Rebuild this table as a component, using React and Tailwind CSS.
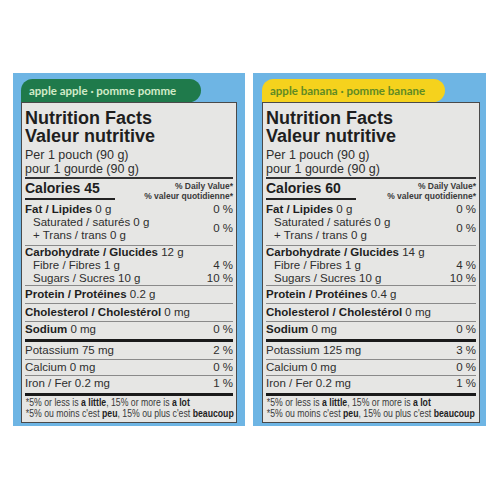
import React from 'react';

const panels = [
  {
    tab: 'apple apple · pomme pomme',
    tabClass: 'w-[180px] bg-[#1f7a4b] text-[#d2ebc8]',
    pad: 'pl-[8px] pr-[8px] w-[232px]',
    cal: '45',
    carb: '12 g',
    protein: '0.2 g',
    potassium: '75 mg',
    potPct: '2 %',
  },
  {
    tab: 'apple banana · pomme banane',
    tabClass: 'w-[183px] bg-[#f5d21d] text-[#5f8a24]',
    pad: 'pl-[9px] pr-[6px] w-[233px]',
    cal: '60',
    carb: '14 g',
    protein: '0.4 g',
    potassium: '125 mg',
    potPct: '3 %',
  },
];

const Row = ({ children, pct, className = '' }) => (
  <div className={`flex justify-between leading-[13px] ${className}`}>
    <div>{children}</div>
    {pct && <div>{pct}</div>}
  </div>
);

const Label = ({ b, v }) => (
  <>
    <span className="font-bold text-[#1e1e1e]">{b}</span> {v}
  </>
);

const Panel = ({ p }) => (
  <div className={`bg-[#6eb5e4] pt-[6px] pb-[3px] ${p.pad}`}>
    <div
      className={`h-[23px] flex items-center pl-[8px] rounded-tl-[12px] rounded-r-[12px] font-bold text-[11.5px] ${p.tabClass}`}
      style={{ fontFamily: 'Lato, "Open Sans", sans-serif' }}
    >
      {p.tab}
    </div>
    <div
      className="border-[1.5px] border-[#4a4a4a] bg-[#e6e6e4] px-[3px] pt-[6px] pb-[3.5px] text-[#2e2e2e] text-[11.5px]"
      style={{ fontFamily: '"Liberation Sans", Arial, sans-serif' }}
    >
      <div className="font-bold text-[18px] leading-[18px] text-[#1e1e1e]">
        <div>Nutrition Facts</div>
        <div>Valeur nutritive</div>
      </div>
      <div className="mt-[2.5px] text-[12.5px] leading-[14px]">
        <div>Per 1 pouch (90 g)</div>
        <div>pour 1 gourde (90 g)</div>
      </div>
      <div className="mt-[1px] h-[2px] bg-[#333]" />

      {/* calories */}
      <div className="mt-[1px] flex justify-between">
        <div>
          <div className="font-bold text-[14px] leading-[16px] text-[#1e1e1e]">Calories {p.cal}</div>
          <div className="mt-[2px] h-[2.5px] w-[90px] bg-[#222]" />
        </div>
        <div className="pt-[1px] text-right font-bold text-[8.5px] leading-[10px] text-[#3a3a3a]">
          <div>% Daily Value*</div>
          <div>% valeur quotidienne*</div>
        </div>
      </div>

      <div className="pt-[2.7px] pb-[4.3px] border-b border-[#8a8a8a] leading-[12.5px]">
        <Row pct="0 %" className="leading-[12.5px]">
          <Label b="Fat / Lipides" v="0 g" />
        </Row>
        <div className="flex justify-between items-center">
          <div className="pl-[8px]">
            <div>Saturated / saturés 0 g</div>
            <div>+ Trans / trans 0 g</div>
          </div>
          <div>0 %</div>
        </div>
      </div>

      <div className="border-b border-[#8a8a8a]">
        <Row>
          <Label b="Carbohydrate / Glucides" v={p.carb} />
        </Row>
        <Row pct="4 %" className="pl-[8px]">Fibre / Fibres 1 g</Row>
        <Row pct="10 %" className="pl-[8px]">Sugars / Sucres 10 g</Row>
      </div>

      <Row className="pt-[2px] pb-[2px] border-b border-[#8a8a8a]">
        <Label b="Protein / Protéines" v={p.protein} />
      </Row>
      <Row className="pt-[2px] pb-[2px] border-b border-[#8a8a8a]">
        <Label b="Cholesterol / Cholestérol" v="0 mg" />
      </Row>
      <Row pct="0 %" className="pt-[1px] pb-[2.5px] border-b-[3px] border-[#1a1a1a]">
        <Label b="Sodium" v="0 mg" />
      </Row>
      <Row pct={p.potPct} className="pt-[2px] pb-[2px] border-b border-[#8a8a8a]">
        Potassium {p.potassium}
      </Row>
      <Row pct="0 %" className="pt-[1px] pb-[1.5px] border-b border-[#8a8a8a]">
        Calcium 0 mg
      </Row>
      <Row pct="1 %" className="pt-[1px] pb-[2.5px] border-b-[3.5px] border-[#1a1a1a]">
        Iron / Fer 0.2 mg
      </Row>

      {/* footnote is set in a condensed face on the label */}
      <div className="pt-[1px] pl-[1px] text-[10px] leading-[11px] text-[#3a3a3a] whitespace-nowrap scale-x-[0.87] origin-left">
        <div>
          *5% or less is <b className="text-[#1e1e1e]">a little</b>, 15% or more is <b className="text-[#1e1e1e]">a lot</b>
        </div>
        <div>
          *5% ou moins c'est <b className="text-[#1e1e1e]">peu</b>, 15% ou plus c'est <b className="text-[#1e1e1e]">beaucoup</b>
        </div>
      </div>
    </div>
  </div>
);

export default function App() {
  return (
    <div className="w-[500px] h-[500px] bg-white pt-[73px] pl-[13px] flex items-start gap-[8px]">
      {panels.map((p) => (
        <Panel key={p.tab} p={p} />
      ))}
    </div>
  );
}
